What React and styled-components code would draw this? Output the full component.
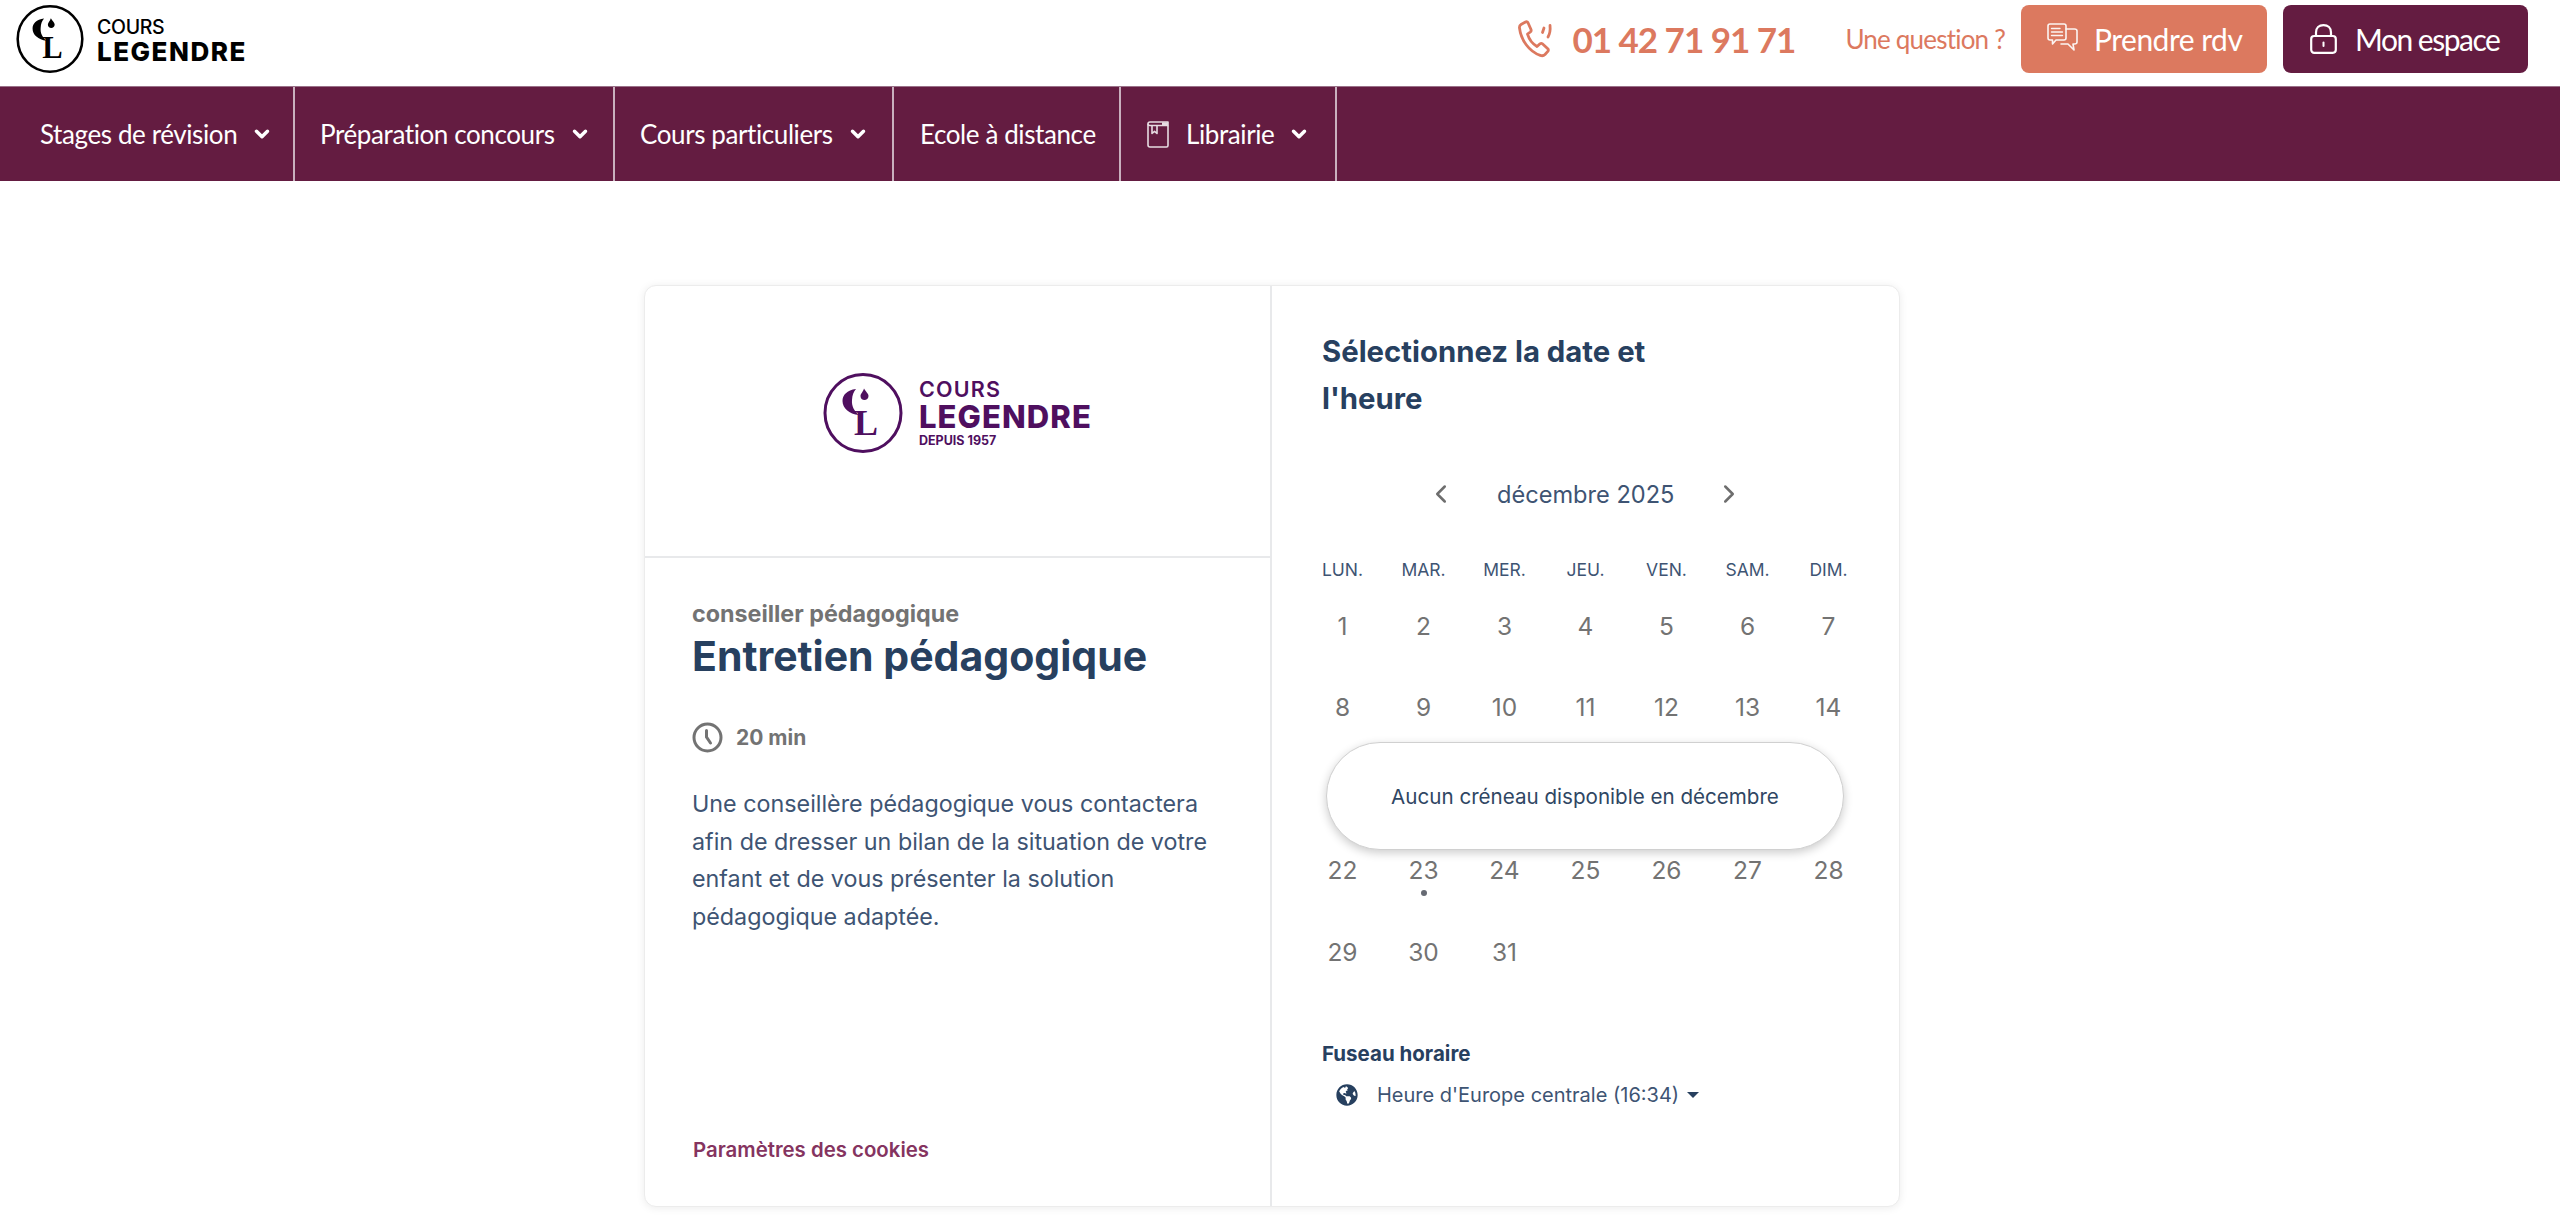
import React from 'react';
import styled, { createGlobalStyle } from 'styled-components';
import { ChevronDown, ChevronLeft, ChevronRight } from 'lucide-react';
import { FaGlobeAmericas } from 'react-icons/fa';

const Global = createGlobalStyle`
  html, body { margin: 0; padding: 0; background: #fff; }
  * { box-sizing: border-box; }
`;

const Page = styled.div`
  width: 2560px;
  height: 1220px;
  overflow: hidden;
  font-family: "Inter", "Liberation Sans", sans-serif;
`;

const Header = styled.header`
  height: 86px;
  display: flex;
  align-items: flex-start;
  justify-content: space-between;
  padding: 5px 32px 0 16px;
`;

const Brand = styled.div`
  display: flex;
  align-items: ${p => p.$align || 'center'};
  gap: ${p => p.$gap}px;
  color: ${p => p.$color};
`;

const Wordmark = styled.div`
  display: flex;
  flex-direction: column;
  font-family: "Inter", sans-serif;
`;

const MarkLine = styled.span`
  font-size: ${p => p.$size}px;
  font-weight: ${p => p.$weight};
  letter-spacing: ${p => p.$track}px;
  line-height: ${p => p.$lh}px;
  margin-top: ${p => p.$mt || 0}px;
  white-space: nowrap;
`;

const HeaderRight = styled.div`
  display: flex;
  align-items: center;
  height: 68px;
  font-family: "Lato", sans-serif;
`;

const PhoneLink = styled.a`
  display: flex;
  align-items: center;
  gap: 18px;
  color: #dc795f;
  font-size: 35px;
  font-weight: 700;
  letter-spacing: -1px;
  margin-right: 50px;
`;

const Question = styled.span`
  color: #dc795f;
  font-size: 26px;
  letter-spacing: -0.8px;
  margin-right: 16px;
`;

const ActionButton = styled.a`
  display: flex;
  align-items: center;
  height: 68px;
  width: ${p => p.$w}px;
  padding-left: ${p => p.$pad}px;
  gap: ${p => p.$gap}px;
  margin-left: ${p => p.$ml}px;
  border-radius: 8px;
  background: ${p => p.$bg};
  color: #fff;
  font-size: 30px;
  letter-spacing: ${p => p.$track}px;
`;

const Nav = styled.nav`
  height: 95px;
  display: flex;
  background: #641c41;
  border-top: 1px solid #9a7189;
  font-family: "Lato", sans-serif;
  color: #fff;
`;

const NavItem = styled.a`
  display: flex;
  align-items: center;
  width: ${p => p.$w}px;
  padding-left: ${p => p.$pad}px;
  border-right: 2px solid #c9b0be;
  font-size: 26px;
  letter-spacing: -0.4px;
`;

const NavChevron = styled(ChevronDown)`
  margin-left: 14px;
`;

const NavBook = styled.span`
  display: flex;
  margin-right: 17px;
`;

const Main = styled.main`
  padding: 104px 0 0 644px;
`;

const Card = styled.section`
  width: 1256px;
  height: 922px;
  display: flex;
  background: #fff;
  border-radius: 12px;
  border: 1px solid #ececec;
  box-shadow: 0 1px 8px rgba(0, 0, 0, 0.08);
`;

const LeftPanel = styled.div`
  width: 627px;
  display: flex;
  flex-direction: column;
  border-right: 2px solid #e8e9eb;
`;

const LogoBlock = styled.div`
  height: 272px;
  flex: none;
  display: flex;
  justify-content: center;
  padding-top: 87px;
  border-bottom: 2px solid #e8e9eb;
`;

const Details = styled.div`
  flex: 1;
  display: flex;
  flex-direction: column;
  padding: 42px 47px 43px;
`;

const Organizer = styled.div`
  font-size: 23.3px;
  font-weight: 700;
  line-height: 28px;
  color: #737373;
`;

const EventTitle = styled.h1`
  margin: 2px 0 0;
  font-size: 41px;
  font-weight: 700;
  line-height: 52px;
  color: #27405f;
`;

const Duration = styled.div`
  display: flex;
  align-items: center;
  gap: 13px;
  height: 32px;
  margin-top: 39px;
  font-size: 21px;
  font-weight: 700;
  color: #737373;
`;

const Description = styled.p`
  margin: 32px 0 0;
  font-size: 23.3px;
  line-height: 37.7px;
  color: #3e5473;
`;

const Cookies = styled.a`
  margin-top: auto;
  padding-left: 1px;
  font-size: 20.4px;
  font-weight: 600;
  line-height: 26px;
  color: #85345f;
`;

const RightPanel = styled.div`
  flex: 1;
  padding: 42px 0 0 50px;
`;

const PanelTitle = styled.h2`
  margin: 0;
  width: 400px;
  font-size: 29.3px;
  font-weight: 700;
  line-height: 47px;
  color: #27405f;
`;

const MonthNav = styled.div`
  display: flex;
  align-items: center;
  height: 40px;
  margin: 52px 0 0 104px;
  color: #6e6e6e;
`;

const MonthLabel = styled.span`
  margin: 0 40px 0 41px;
  font-size: 23.6px;
  color: #3e5473;
`;

const CalendarArea = styled.div`
  position: relative;
  width: 570px;
  margin-left: -20px;
`;

const Weekdays = styled.div`
  display: grid;
  grid-template-columns: repeat(7, 81px);
  height: 30px;
  margin-top: 40px;
  align-items: center;
`;

const Weekday = styled.div`
  text-align: center;
  font-size: 17.5px;
  color: #3e5473;
`;

const Days = styled.div`
  display: grid;
  grid-template-columns: repeat(7, 81px);
  grid-auto-rows: 81.5px;
  margin-top: 1px;
`;

const Day = styled.div`
  position: relative;
  display: flex;
  align-items: center;
  justify-content: center;
  font-size: 24.5px;
  color: #737373;
`;

const Dot = styled.i`
  position: absolute;
  left: 50%;
  top: 60px;
  width: 6px;
  height: 6px;
  margin-left: -3px;
  border-radius: 50%;
  background: #666a73;
`;

const NoSlots = styled.div`
  position: absolute;
  left: 24px;
  top: 188px;
  width: 518px;
  height: 108px;
  display: flex;
  align-items: center;
  justify-content: center;
  border-radius: 54px;
  background: #fff;
  border: 1px solid #d0d0d0;
  box-shadow: 0 3px 10px rgba(0, 0, 0, 0.2);
  font-size: 20.6px;
  color: #2f4663;
`;

const ZoneLabel = styled.div`
  margin-top: 46px;
  font-size: 20.5px;
  font-weight: 700;
  line-height: 30px;
  color: #27405f;
`;

const ZoneRow = styled.div`
  display: flex;
  align-items: center;
  height: 40px;
  margin: 6px 0 0 14px;
  color: #27405f;
`;

const ZoneText = styled.span`
  margin: 0 8px 0 19px;
  font-size: 20px;
  color: #3e5473;
`;

const Caret = styled.i`
  width: 0;
  height: 0;
  border-left: 6px solid transparent;
  border-right: 6px solid transparent;
  border-top: 6px solid #27405f;
`;

const CLMark = ({ size }) => (
  <svg width={size} height={size} viewBox="0 0 80 80" fill="none">
    <ellipse cx="40" cy="40" rx="38" ry="38.5" stroke="currentColor" strokeWidth="3" />
    <path d="M33 16 C24 17 19.5 22 19.5 28 C19.5 35 26 41 36 42 C31 38 28.5 33 29 27 C29.3 22 30.5 19 33 16 Z" fill="currentColor" />
    <path d="M41 15.5 C43 19 45.5 20.5 45.5 23 C45.5 25.5 43.5 27 41.5 27 C39.2 27 37.5 25.5 37.5 23 C37.5 20.5 40 19 41 15.5 Z" fill="currentColor" />
    <text x="31" y="62" fontFamily="Liberation Serif, serif" fontWeight="700" fontSize="36" fill="currentColor">L</text>
  </svg>
);

const PhoneIcon = () => (
  <svg width="36" height="38" viewBox="0 0 36 38" fill="none" stroke="#dc795f" strokeWidth="2.8" strokeLinecap="round" strokeLinejoin="round">
    <path d="M3 4.5 L7.5 2 C8.5 1.5 9.5 1.8 10 2.8 L13 9.5 C13.4 10.5 13.1 11.3 12.3 12 L9.5 14.2 C11 19 14.5 24 19 26.5 L22 23.8 C22.8 23.2 23.7 23.2 24.4 23.8 L29.8 28.8 C30.6 29.6 30.6 30.6 29.8 31.4 L27 34.5 C25.8 35.7 24 36 22.3 35.4 C11 31.5 3 20 1.5 8 C1.3 6.5 1.8 5.2 3 4.5 Z" />
    <path d="M24.5 12.5 L26 8" />
    <path d="M30 17 C32 13.5 32.5 10 32 5.5" />
  </svg>
);

const ChatIcon = () => (
  <svg width="31" height="32" viewBox="0 0 31 32" fill="none" stroke="#fff" strokeWidth="1.6" strokeLinejoin="round" strokeLinecap="round" opacity="0.92">
    <path d="M3 1 H17 C18 1 19 2 19 3 V15 C19 16 18 17 17 17 H9 L5.5 21 V17 H3 C2 17 1 16 1 15 V3 C1 2 2 1 3 1 Z" />
    <path d="M19 6 H27.5 C29 6 30 7 30 8 V19 C30 20 29 21 27.5 21 H26 L27 27 L21 21 H14" />
    <path d="M4.5 5.5 H13 M4.5 9 H15.5 M4.5 12.5 H15.5" strokeWidth="1.4" />
  </svg>
);

const LockIcon = () => (
  <svg width="27" height="30" viewBox="0 0 27 30" fill="none" stroke="#fff" strokeWidth="2.2" strokeLinejoin="round">
    <rect x="1.2" y="12" width="24.6" height="16.8" rx="3" />
    <path d="M6 12 V8.5 C6 4 9 1.2 13.5 1.2 C18 1.2 21 4 21 8.5 V12" />
    <path d="M13.5 18.5 V22" strokeWidth="2" strokeLinecap="round" />
  </svg>
);

const BookIcon = () => (
  <svg width="22" height="27" viewBox="0 0 22 27" fill="none" stroke="#e6dbe1" strokeWidth="1.6" strokeLinejoin="round">
    <path d="M3 1 H21 V4.5 H3 C1.8 4.5 1 3.7 1 2.8 C1 1.8 1.8 1 3 1 Z" />
    <path d="M1 2.8 V24 C1 25.2 1.8 26 3 26 H19.5 C20.5 26 21 25.3 21 24.5 V4.5" />
    <path d="M5 4.5 V12.5 L7.5 10.3 L10 12.5 V4.5" />
    <path d="M15 2.8 H21" strokeWidth="3" />
  </svg>
);

const ClockIcon = () => (
  <svg width="31" height="31" viewBox="0 0 31 31" fill="none" stroke="#737373" strokeWidth="3" strokeLinecap="round">
    <circle cx="15.5" cy="15.5" r="13.5" />
    <path d="M14.5 8.5 V15 L18.5 21" />
  </svg>
);

const navItems = [
  { label: 'Stages de révision', w: 295, pad: 40, chev: true },
  { label: 'Préparation concours', w: 320, pad: 25, chev: true },
  { label: 'Cours particuliers', w: 279, pad: 25, chev: true },
  { label: 'Ecole à distance', w: 227, pad: 26 },
  { label: 'Librairie', w: 216, pad: 26, chev: true, book: true },
];

const weekdays = ['Lun.', 'Mar.', 'Mer.', 'Jeu.', 'Ven.', 'Sam.', 'Dim.'];
const days = Array.from({ length: 31 }, (_, i) => i + 1);
const coveredByNotice = d => d >= 15 && d <= 21;

export default function App() {
  return (
    <Page>
      <Global />
      <Header>
        <Brand $gap={13} $color="#000">
          <CLMark size={68} />
          <Wordmark>
            <MarkLine $size={19.5} $weight={500} $track={-0.3} $lh={24}>COURS</MarkLine>
            <MarkLine $size={26} $weight={800} $track={1.5} $lh={25}>LEGENDRE</MarkLine>
          </Wordmark>
        </Brand>
        <HeaderRight>
          <PhoneLink><PhoneIcon />01 42 71 91 71</PhoneLink>
          <Question>Une question ?</Question>
          <ActionButton $w={246} $pad={26} $gap={16} $track={-0.5} $bg="#dc795f" $ml={0}><ChatIcon />Prendre rdv</ActionButton>
          <ActionButton $w={245} $pad={27} $gap={18} $track={-1.5} $bg="#641c41" $ml={16}><LockIcon />Mon espace</ActionButton>
        </HeaderRight>
      </Header>
      <Nav>
        {navItems.map(item => (
          <NavItem key={item.label} $w={item.w} $pad={item.pad}>
            {item.book && <NavBook><BookIcon /></NavBook>}
            {item.label}
            {item.chev && <NavChevron size={22} strokeWidth={3.8} />}
          </NavItem>
        ))}
      </Nav>
      <Main>
        <Card>
          <LeftPanel>
            <LogoBlock>
              <Brand $gap={16} $color="#4f0f5f" $align="flex-start">
                <CLMark size={80} />
                <Wordmark>
                  <MarkLine $size={21.5} $weight={600} $track={1.2} $lh={26} $mt={3}>COURS</MarkLine>
                  <MarkLine $size={31} $weight={800} $track={1.1} $lh={30}>LEGENDRE</MarkLine>
                  <MarkLine $size={12.5} $weight={700} $track={0} $lh={16} $mt={1}>DEPUIS 1957</MarkLine>
                </Wordmark>
              </Brand>
            </LogoBlock>
            <Details>
              <Organizer>conseiller pédagogique</Organizer>
              <EventTitle>Entretien pédagogique</EventTitle>
              <Duration><ClockIcon />20 min</Duration>
              <Description>
                Une conseillère pédagogique vous contactera afin de dresser un bilan de la situation de votre enfant et de vous présenter la solution pédagogique adaptée.
              </Description>
              <Cookies>Paramètres des cookies</Cookies>
            </Details>
          </LeftPanel>
          <RightPanel>
            <PanelTitle>Sélectionnez la date et l'heure</PanelTitle>
            <MonthNav>
              <ChevronLeft size={30} strokeWidth={2} />
              <MonthLabel>décembre 2025</MonthLabel>
              <ChevronRight size={30} strokeWidth={2} />
            </MonthNav>
            <CalendarArea>
              <Weekdays>
                {weekdays.map(d => <Weekday key={d}>{d.toUpperCase()}</Weekday>)}
              </Weekdays>
              <Days>
                {days.map(d => (
                  <Day key={d}>
                    {!coveredByNotice(d) && d}
                    {d === 23 && <Dot />}
                  </Day>
                ))}
              </Days>
              <NoSlots>Aucun créneau disponible en décembre</NoSlots>
            </CalendarArea>
            <ZoneLabel>Fuseau horaire</ZoneLabel>
            <ZoneRow>
              <FaGlobeAmericas size={22} />
              <ZoneText>Heure d'Europe centrale (16:34)</ZoneText>
              <Caret />
            </ZoneRow>
          </RightPanel>
        </Card>
      </Main>
    </Page>
  );
}
